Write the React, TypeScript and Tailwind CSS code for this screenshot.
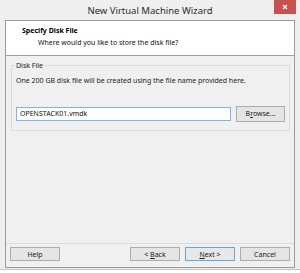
import React from 'react';

const font = { fontFamily: '"Noto Sans", "Liberation Sans", sans-serif' };

const Button: React.FC<{ children: React.ReactNode; primary?: boolean }> = ({ children, primary }) => (
  <button
    className={
      primary
        ? 'w-[50px] h-[14px] flex items-center justify-center bg-[#e8e8e8] border border-[#63a7e6] text-[7px] leading-none text-[#222]'
        : 'w-[50px] h-[14px] flex items-center justify-center bg-[#e5e5e5] border border-[#adadad] text-[7px] leading-none text-[#222]'
    }
  >
    {children}
  </button>
);

export default function App() {
  return (
    <div className="w-[300px] h-[273px] bg-white" style={font}>
      <div className="w-[300px] h-[270px] bg-[#efefef] border-b border-[#c4c4c4] flex flex-col">
        {/* Title bar */}
        <div className="relative h-[20px] flex items-center justify-center">
          <span className="text-[9.5px] text-[#2b2b2b] pt-[2px]">New Virtual Machine Wizard</span>
          <div className="absolute top-0 right-[4px] w-[22px] h-[14px] bg-[#c75050] flex items-center justify-center">
            <svg width="6" height="6" viewBox="0 0 6 6">
              <path d="M1 1 L5 5 M5 1 L1 5" stroke="#fff" strokeWidth="1.3" />
            </svg>
          </div>
        </div>

        {/* Client */}
        <div className="mx-[5px] flex-1 flex flex-col border border-[#9a9a9a] bg-[#f0f0f0] mb-[1px]">
          <div className="h-[35px] bg-white border-b border-[#a0a0a0] flex flex-col pl-[16px] pt-[5px]">
            <span className="text-[7px] font-bold text-black leading-[9px]">Specify Disk File</span>
            <span className="text-[7px] text-[#111] leading-[9px] pl-[16px] mt-[3px]">
              Where would you like to store the disk file?
            </span>
          </div>

          <div className="flex-1 px-[4px] pt-[9px]">
            <div className="relative ml-[1px] mr-[0px] h-[66px] border border-[#dcdcdc] rounded-[1px] px-[4px]">
              <span className="absolute -top-[5px] left-[3px] bg-[#f0f0f0] px-[1px] text-[7px] leading-[9px] text-[#222]">
                Disk File
              </span>
              <div className="pt-[10px] text-[7px] leading-[9px] text-[#222]">
                One 200 GB disk file will be created using the file name provided here.
              </div>
              <div className="flex items-center gap-[5px] mt-[21px]">
                <div className="w-[215px] h-[14px] bg-white border border-[#7eb4ea] flex items-center px-[3px] text-[7px] text-[#111]">
                  OPENSTACK01.vmdk
                </div>
                <button className="w-[49px] h-[16px] flex items-center justify-center bg-[#e5e5e5] border border-[#adadad] text-[7px] text-[#222]">
                  <span>
                    B<span className="underline">r</span>owse...
                  </span>
                </button>
              </div>
            </div>
          </div>

          <div className="h-[24px] border-t border-[#dadada] flex items-center px-[4px] pb-[3px]">
            <Button>Help</Button>
            <div className="flex-1" />
            <div className="flex gap-[5px]">
              <Button>
                <span>
                  &lt; <span className="underline">B</span>ack
                </span>
              </Button>
              <Button primary>
                <span>
                  <span className="underline">N</span>ext &gt;
                </span>
              </Button>
              <Button>Cancel</Button>
            </div>
          </div>
        </div>
      </div>
    </div>
  );
}
